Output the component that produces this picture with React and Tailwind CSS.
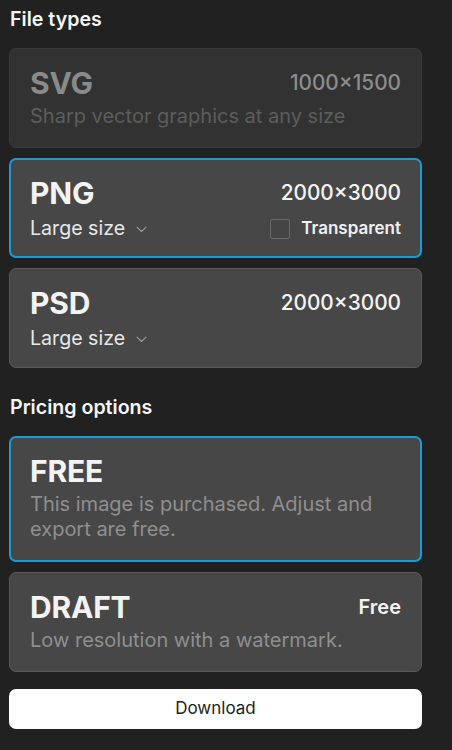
import React from "react";

function Chevron() {
  return (
    <svg width="11" height="7" viewBox="0 0 11 7" fill="none" className="ml-[11px] mt-[1px]">
      <path d="M1 1.2L5.5 5.5L10 1.2" stroke="#9a9a9a" strokeWidth="1.1" strokeLinecap="round" strokeLinejoin="round" />
    </svg>
  );
}

function Card({ selected, disabled, title, right, children, lower }) {
  const base = "rounded-[7px] flex flex-col";
  const cls = disabled
    ? "border border-[#3a3a3a] bg-[#323232] px-[20px] pt-[17px] pb-[18px]"
    : selected
    ? `border-2 border-[#1b9bd8] bg-[#474747] px-[19px] pt-[16px] ${lower ? "pb-[15px]" : "pb-[17px]"}`
    : `border border-[#575757] bg-[#474747] px-[20px] pt-[17px] ${lower ? "pb-[16px]" : "pb-[18px]"}`;
  return (
    <div className={`${base} ${cls}`}>
      <div className="flex items-center justify-between h-[34px]">
        <span className={`text-[30px] font-bold leading-[34px] tracking-[-0.2px] ${disabled ? "text-[#8a8a8a]" : "text-[#f3f3f3]"}`}>{title}</span>
        {right}
      </div>
      <div className={lower ? "mt-[6px]" : "mt-[4px]"}>{children}</div>
    </div>
  );
}

export default function App() {
  return (
    <div className="w-[452px] h-[750px] bg-[#212121] px-[9px] pt-[5px] overflow-hidden" style={{ fontFamily: "Inter, 'Noto Sans', sans-serif" }}>
      <div className="w-[413px]">
        <div className="h-[29px] flex items-center pl-[1px] text-[19.6px] font-semibold text-[#f5f5f5]">File types</div>
        <div className="mt-[14px] flex flex-col gap-[10px]">
          <Card disabled title="SVG" right={<span className="text-[20.8px] font-medium text-[#8c8c8c]">1000×1500</span>}>
            <div className="text-[20px] leading-[25px] text-[#5d5d5d]">Sharp vector graphics at any size</div>
          </Card>
          <Card selected lower title="PNG" right={<span className="text-[20.8px] font-medium text-[#f3f3f3]">2000×3000</span>}>
            <div className="flex items-center justify-between h-[25px]">
              <div className="flex items-center text-[19.6px] text-[#e8e8e8]">Large size<Chevron /></div>
              <label className="flex items-center">
                <span className="w-[20px] h-[20px] border border-[#6a6a6a] rounded-[2px] bg-[#454545]" />
                <span className="ml-[11px] text-[17px] font-semibold text-[#f0f0f0]">Transparent</span>
              </label>
            </div>
          </Card>
          <Card lower title="PSD" right={<span className="text-[20.8px] font-medium text-[#f3f3f3]">2000×3000</span>}>
            <div className="flex items-center h-[25px] text-[19.6px] text-[#e8e8e8]">Large size<Chevron /></div>
          </Card>
        </div>
        <div className="mt-[26px] h-[28px] flex items-center pl-[1px] text-[19.6px] font-semibold text-[#f5f5f5]">Pricing options</div>
        <div className="mt-[14px] flex flex-col gap-[10px]">
          <Card selected title="FREE">
            <div className="text-[20px] leading-[25px] text-[#8f8f8f] pr-[20px] pb-[1px]">This image is purchased. Adjust and export are free.</div>
          </Card>
          <Card title="DRAFT" right={<span className="text-[20px] font-semibold text-[#f3f3f3]">Free</span>}>
            <div className="text-[20px] leading-[25px] text-[#8f8f8f]">Low resolution with a watermark.</div>
          </Card>
        </div>
        <button className="mt-[17px] w-full h-[40px] rounded-[7px] bg-white text-[17px] text-[#222] flex items-center justify-center">Download</button>
      </div>
    </div>
  );
}
